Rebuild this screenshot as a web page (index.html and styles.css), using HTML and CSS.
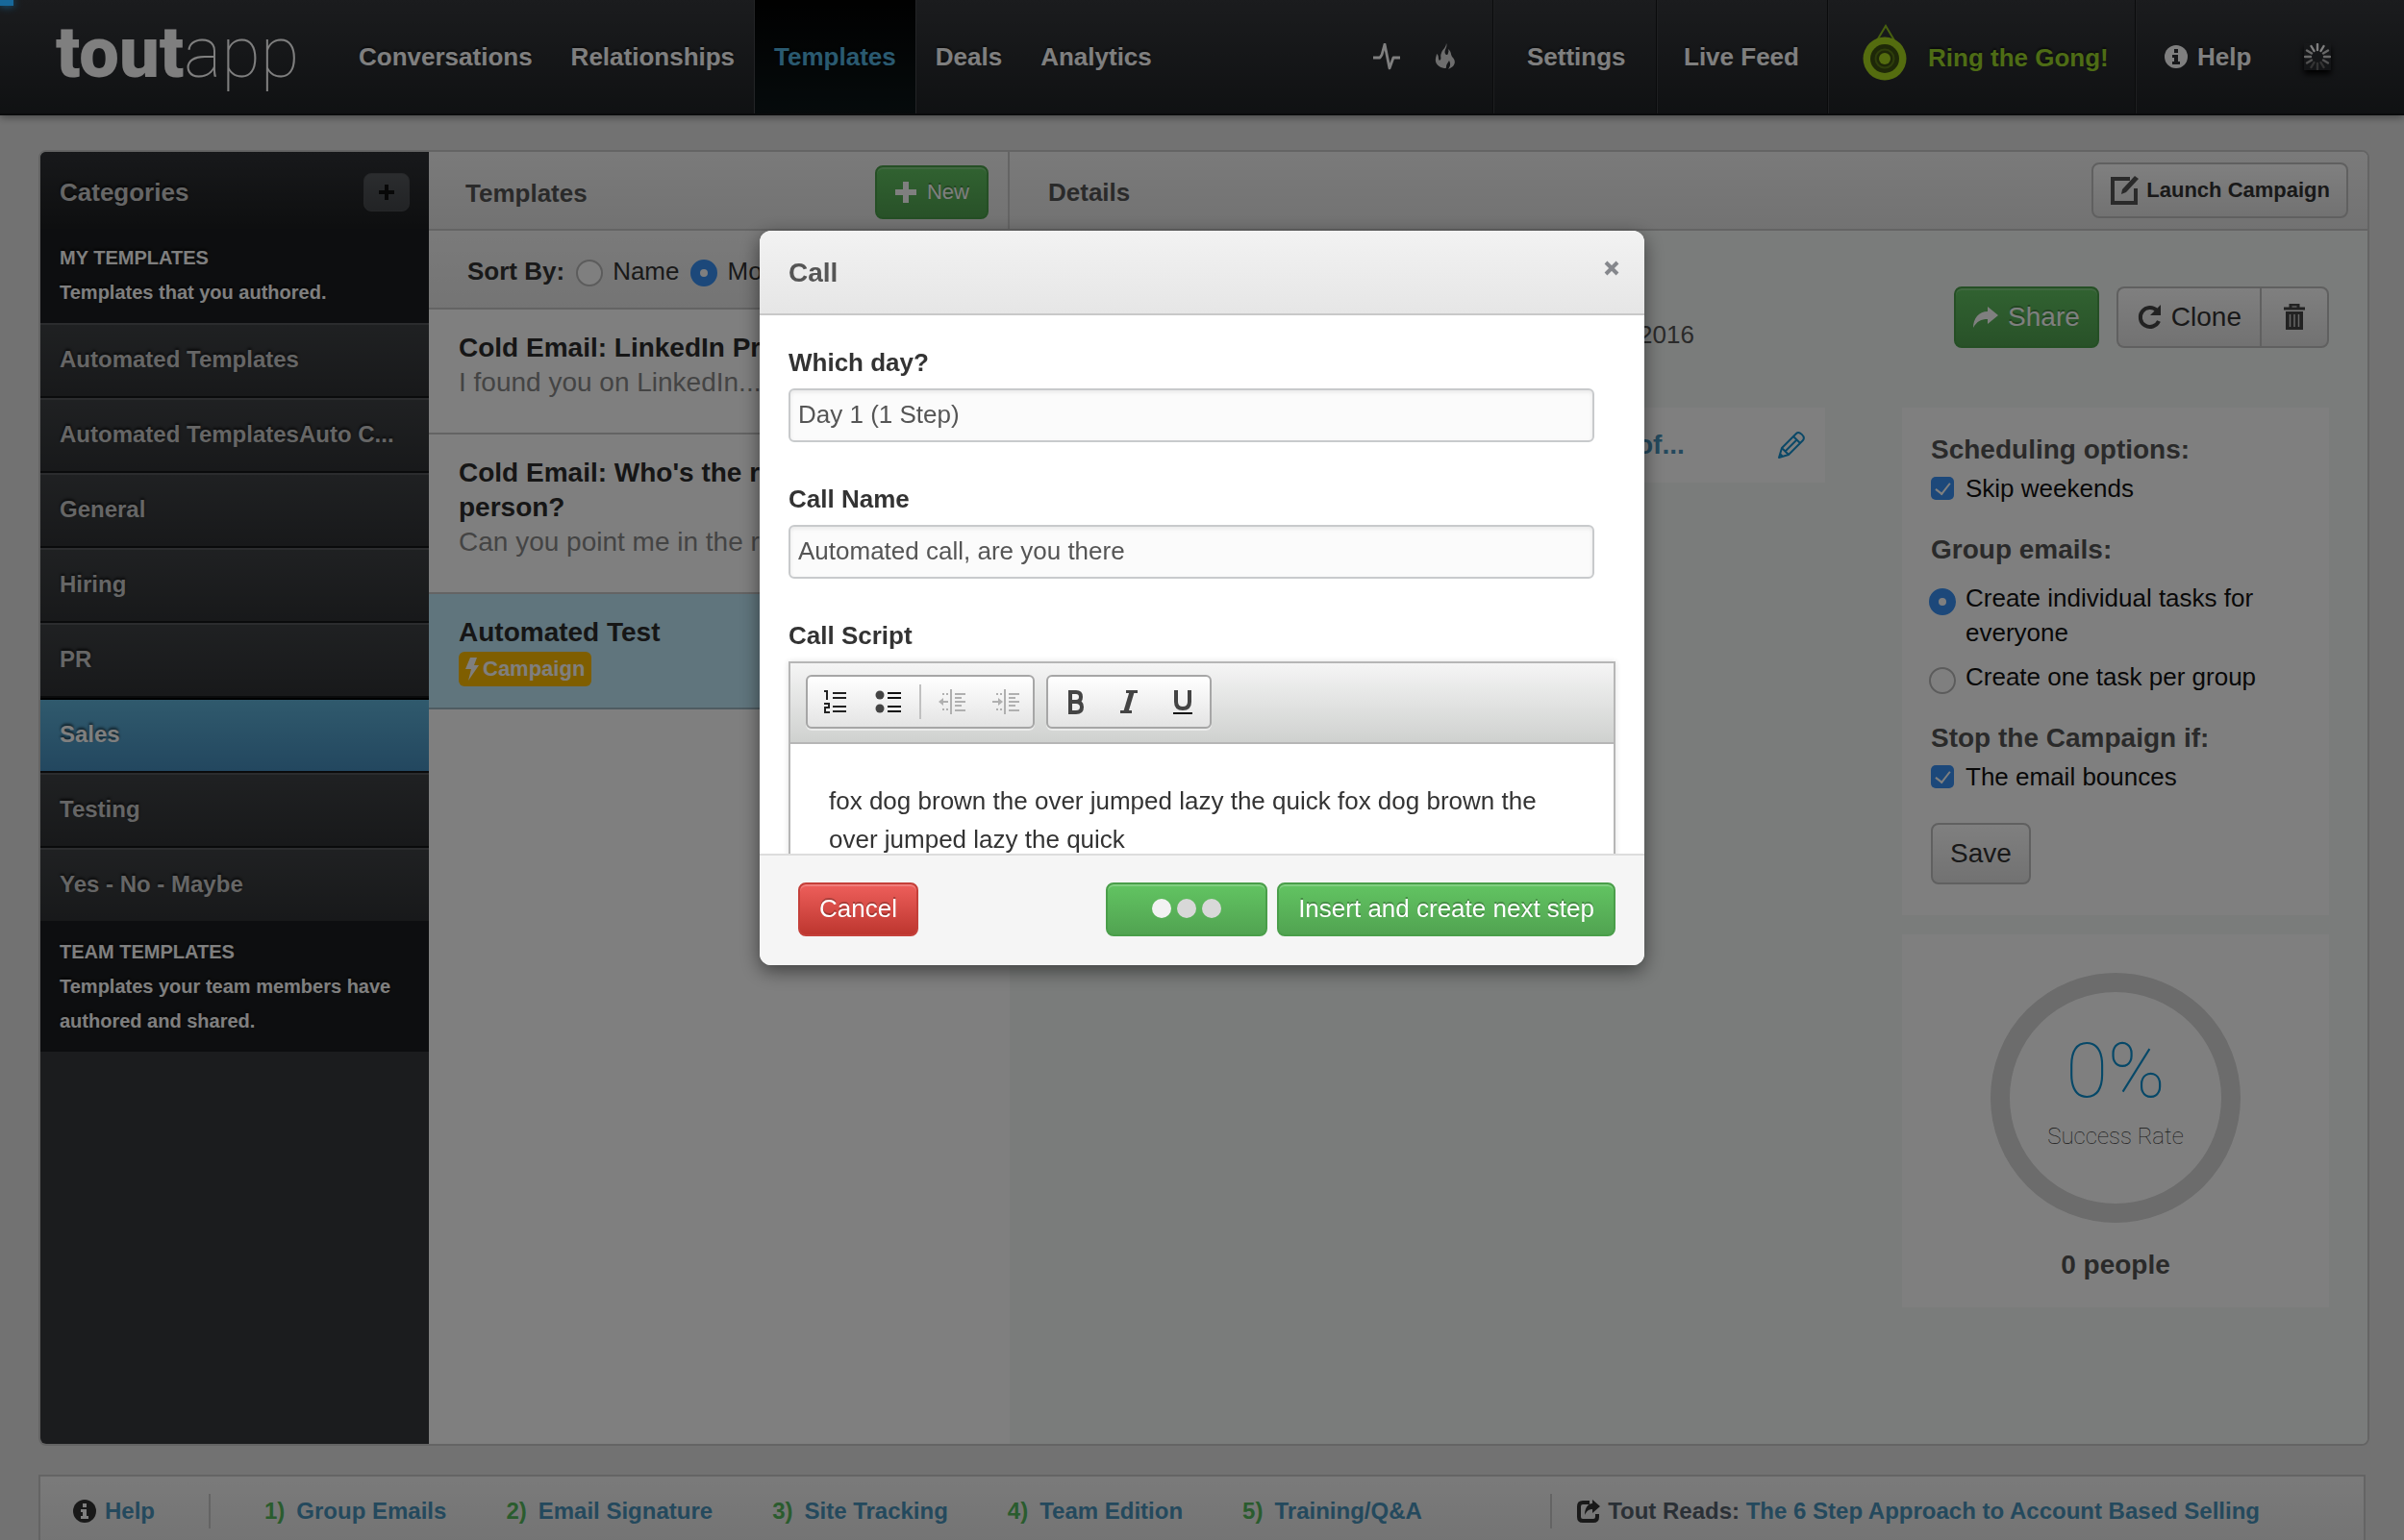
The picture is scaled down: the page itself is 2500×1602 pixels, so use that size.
FILE: index.html
```html
<!DOCTYPE html>
<html lang="en">
<head>
<meta charset="utf-8">
<title>ToutApp - Templates</title>
<link rel="stylesheet" href="styles.css">
</head>
<body>
<div class="app">
  <header class="topbar">
    <a class="logo" href="#"><span class="logo-bold">tout</span><span class="logo-thin">app</span></a>
    <nav class="nav">
      <a href="#">Conversations</a>
      <a href="#">Relationships</a>
      <a href="#" class="active">Templates</a>
      <a href="#">Deals</a>
      <a href="#">Analytics</a>
    </nav>
    <div class="tools">
      <svg width="28" height="28" viewBox="0 0 28 28"><path d="M0 15h7l2-3 3-11 5 25 4-11h7" fill="none" stroke="#fff" stroke-width="2.800" stroke-linejoin="round"/></svg>
      <svg width="22" height="28" viewBox="0 0 22 28"><path d="M12 0c2 4-3 7-1 11 1 2 3 1 3-1 1-2 0-3 0-4 4 3 2 6 5 9 4 5 1 10-5 12 2-3 3-5 1-9-1 2-3 4-3 6s0 2-2 2c-6-1-10-5-9-10 0-2 1-3 1-5 3 2 1 5 3 7 3-2 0-4 2-8 1-4 5-5 5-10z" fill="#ddd"/></svg>
    </div>
    <div class="account">
      <a href="#" class="settings">Settings</a>
      <a href="#" class="feed">Live Feed</a>
      <a href="#" class="gong">
        <svg width="46" height="60" viewBox="0 0 46 60"><path d="M15 17 24 2l9 15" fill="none" stroke="#8fc01e" stroke-width="2"/><circle cx="23" cy="36" r="22.500" fill="#a8d81e"/><circle cx="23" cy="36" r="15" fill="#3c5010"/><circle cx="23" cy="36" r="9.500" fill="none" stroke="#5d7c16" stroke-width="2"/><circle cx="23" cy="36" r="6" fill="#a8d81e"/></svg>
        Ring the Gong!
      </a>
      <a href="#" class="help">
        <svg width="24" height="24" viewBox="0 0 24 24"><circle cx="12" cy="12" r="12" fill="#fff"/><path d="M10 4h4v4h-4zM8 10h6v7h2v3H8v-3h2v-4H8z" fill="#2c2f33"/></svg>
        Help
      </a>
      <span class="spinner">
        <svg width="28" height="28" viewBox="0 0 28 28" stroke-width="2.400" stroke-linecap="round"><g stroke="#fff"><path d="M14 1v6M7.500 3l3 5M20.500 3l-3 5"/></g><g stroke="#d0d0d0"><path d="M3 7.500l5 3M25 7.500l-5 3M1 14h6M27 14h-6"/></g><g stroke="#a0a0a0"><path d="M3 20.500l5-3M25 20.500l-5-3"/></g><g stroke="#666"><path d="M7.500 25l3-5M20.500 25l-3-5M14 27v-6"/></g></svg>
      </span>
    </div>
  </header>

  <main class="panel">
    <aside class="sidebar">
      <div class="sidebar-head"><h2>Categories</h2><button class="add" aria-label="Add category"><svg width="16" height="16" viewBox="0 0 16 16"><path d="M8 0v16M0 8h16" stroke="#111" stroke-width="4"/></svg></button></div>
      <div class="section first"><h3>MY TEMPLATES</h3><p>Templates that you authored.</p></div>
      <ul>
        <li><a href="#">Automated Templates</a></li>
        <li><a href="#">Automated TemplatesAuto C...</a></li>
        <li><a href="#">General</a></li>
        <li><a href="#">Hiring</a></li>
        <li><a href="#">PR</a></li>
        <li><a href="#" class="active">Sales</a></li>
        <li><a href="#">Testing</a></li>
        <li><a href="#">Yes - No - Maybe</a></li>
      </ul>
      <div class="section"><h3>TEAM TEMPLATES</h3><p>Templates your team members have authored and shared.</p></div>
    </aside>

    <section class="templates">
      <div class="bar"><h2>Templates</h2>
        <button class="btn green small"><svg width="24" height="24" viewBox="0 0 24 24"><path d="M9 1h6v8h8v6h-8v8H9v-8H1V9h8z" fill="#fff"/></svg>New</button>
      </div>
      <div class="sort">
        <strong>Sort By:</strong>
        <label><input type="radio" name="sort">Name</label>
        <label><input type="radio" name="sort" checked>Modified</label>
      </div>
      <article class="card"><h3>Cold Email: LinkedIn Pro</h3><p>I found you on LinkedIn...</p></article>
      <article class="card"><h3>Cold Email: Who's the right person?</h3><p>Can you point me in the right</p></article>
      <article class="card selected"><h3>Automated Test</h3>
        <span class="badge"><svg width="14" height="24" viewBox="0 0 14 24"><path d="M5 0h7L9 8h5L3 24l3-12H0z" fill="#fff"/></svg>Campaign</span>
      </article>
    </section>

    <section class="details">
      <div class="bar"><h2>Details</h2>
        <button class="btn launch"><svg width="30" height="32" viewBox="0 0 30 32"><path d="M21 4H3v25h24V14" fill="none" stroke="#555" stroke-width="4"/><path d="M12 20l1-5L26 1l4 3-13 14z" fill="#555"/></svg>Launch Campaign</button>
      </div>
      <div class="detail-grid">
        <div class="summary">
          <p class="date">2016</p>
          <div class="step"><a href="#">of...</a>
            <svg width="30" height="30" viewBox="0 0 30 30" fill="none" stroke="#1590cf" stroke-width="2" stroke-linejoin="round"><path d="M2 28l3-10L20 3c3-3 10 3 7 7L12 25zM5 18l7 7M17 6l7 7M9 21L21 9M3 24l3 3"/></svg>
          </div>
        </div>
        <div class="side">
          <div class="actions">
            <button class="btn green"><svg width="26" height="22" viewBox="0 0 26 22"><path d="M15 0l11 9-11 9v-5C8 13 4 15 0 22 0 12 6 5 15 5z" fill="#fff"/></svg>Share</button>
            <div class="group">
              <button class="btn"><svg width="26" height="28" viewBox="0 0 26 28"><path d="M21 7a10 10 0 1 0 2 11" fill="none" stroke="#444" stroke-width="4"/><path d="M25 1v11H14z" fill="#444"/></svg>Clone</button>
              <button class="btn" aria-label="Delete"><svg width="22" height="28" viewBox="0 0 22 28"><path d="M7 4V1h8v3M0 5h22" fill="none" stroke="#444" stroke-width="3"/><path d="M2 8h18v19H2z" fill="#444"/><path d="M6.500 11v13M11 11v13M15.500 11v13" stroke="#ccc" stroke-width="1.500"/></svg></button>
            </div>
          </div>
          <form class="box options">
            <h4>Scheduling options:</h4>
            <label><input type="checkbox" checked>Skip weekends</label>
            <h4>Group emails:</h4>
            <div class="radios">
              <label><input type="radio" name="grp" checked>Create individual tasks for everyone</label>
              <label><input type="radio" name="grp">Create one task per group</label>
            </div>
            <h4>Stop the Campaign if:</h4>
            <label><input type="checkbox" checked>The email bounces</label>
            <button type="button" class="btn save">Save</button>
          </form>
          <div class="box rate">
            <div class="ring"><strong>0%</strong><span>Success Rate</span></div>
            <p>0 people</p>
          </div>
        </div>
      </div>
    </section>
  </main>

  <footer class="foot">
    <a href="#" class="foot-help"><svg width="24" height="24" viewBox="0 0 24 24"><circle cx="12" cy="12" r="12" fill="#333"/><path d="M10 4h4v4h-4zM8 10h6v7h2v3H8v-3h2v-4H8z" fill="#fff"/></svg>Help</a>
    <ol>
      <li><b>1)</b><a href="#">Group Emails</a></li>
      <li><b>2)</b><a href="#">Email Signature</a></li>
      <li><b>3)</b><a href="#">Site Tracking</a></li>
      <li><b>4)</b><a href="#">Team Edition</a></li>
      <li><b>5)</b><a href="#">Training/Q&amp;A</a></li>
    </ol>
    <p class="reads"><svg width="24" height="24" viewBox="0 0 24 24"><path d="M13 3H6Q2 3 2 7v11q0 4 4 4h11q4 0 4-4v-3" fill="none" stroke="#333" stroke-width="4"/><path d="M16 0l8 7-8 7v-4c-4 0-6 2-8 6 0-7 3-12 8-12z" fill="#333"/></svg><span>Tout Reads: <a href="#">The 6 Step Approach to Account Based Selling</a></span></p>
  </footer>
</div>

<div class="backdrop">
  <div class="modal" role="dialog" aria-labelledby="modal-title">
    <div class="modal-head"><h2 id="modal-title">Call</h2><button class="close" aria-label="Close"><svg width="16" height="16" viewBox="0 0 16 16"><path d="M2 2l12 12M14 2L2 14" stroke="#85878c" stroke-width="4"/></svg></button></div>
    <div class="modal-body">
      <label for="day">Which day?</label>
      <input type="text" id="day" value="Day 1 (1 Step)">
      <label for="name">Call Name</label>
      <input type="text" id="name" value="Automated call, are you there">
      <label id="script">Call Script</label>
      <div class="editor">
        <div class="toolbar">
          <div class="tool-group">
            <button aria-label="Numbered list"><svg width="28" height="28" viewBox="0 0 28 28" fill="none" stroke="#222" stroke-width="2"><path d="M3 3h3v9M3 16h5v4H4v5h5M12 5h14M12 10h14M12 19h14M12 24h14"/></svg></button>
            <button aria-label="Bulleted list"><svg width="28" height="28" viewBox="0 0 28 28"><circle cx="5" cy="7" r="4.500" fill="#444"/><circle cx="5" cy="21" r="4.500" fill="#444"/><path d="M13 5h14M13 10h14M13 19h14M13 24h14" stroke="#111" stroke-width="2"/></svg></button>
            <i class="sep"></i>
            <button aria-label="Outdent" disabled><svg width="28" height="28" viewBox="0 0 28 28" fill="none" stroke="#b0b0b0" stroke-width="2"><path d="M13 1v26M17 6h11M17 10h7M17 14h11M17 18h7M17 23h11M4 14h6"/><path d="M4 6h7M4 22h7" stroke-dasharray="2 2"/><path d="M0 14l5-4v8z" fill="#b0b0b0" stroke="none"/></svg></button>
            <button aria-label="Indent" disabled><svg width="28" height="28" viewBox="0 0 28 28" fill="none" stroke="#b0b0b0" stroke-width="2"><path d="M13 1v26M17 6h11M17 10h7M17 14h11M17 18h7M17 23h11M0 14h6"/><path d="M4 6h7M4 22h7" stroke-dasharray="2 2"/><path d="M11 14l-5-4v8z" fill="#b0b0b0" stroke="none"/></svg></button>
          </div>
          <div class="tool-group">
            <button aria-label="Bold"><svg width="28" height="28" viewBox="0 0 28 28"><path d="M7 4h8q5 0 5 5t-5 5h-5M15 14q6 0 6 5.500T15 25H7" fill="none" stroke="#444" stroke-width="4"/><path d="M7 2h4v24H7z" fill="#444"/></svg></button>
            <button aria-label="Italic"><svg width="28" height="28" viewBox="0 0 28 28"><path d="M11 3.500h12M5 24.500h12" stroke="#444" stroke-width="3"/><path d="M17 4l-6 20" stroke="#444" stroke-width="5"/></svg></button>
            <button aria-label="Underline"><svg width="28" height="28" viewBox="0 0 28 28"><path d="M7 2v12q0 7 7 7t7-7V2" fill="none" stroke="#444" stroke-width="4"/><path d="M4 26h20" stroke="#111" stroke-width="2"/></svg></button>
          </div>
        </div>
        <div class="editor-text" contenteditable="true" role="textbox" aria-labelledby="script">fox dog brown the over jumped lazy the quick fox dog brown the over jumped lazy the quick</div>
      </div>
    </div>
    <div class="modal-foot">
      <button class="btn red">Cancel</button>
      <button class="btn green loading" aria-label="Inserting"><i class="on"></i><i></i><i></i></button>
      <button class="btn green">Insert and create next step</button>
    </div>
  </div>
</div>
<div class="progress"></div>
</body>
</html>
```
FILE: styles.css
```css
* { box-sizing: border-box; }
body {
  margin: 0;
  background: #e5e5e5;
  color: #333;
  font: 26px/36px "Liberation Sans", Arial, sans-serif;
}
h2, h3, h4, p, ul, ol { margin: 0; padding: 0; }
ul, ol { list-style: none; }
a { color: inherit; text-decoration: none; }
svg { display: block; flex: none; }
button { font: inherit; cursor: pointer; }
h2 { font-size: 26px; }

.app {
  display: flex;
  flex-direction: column;
  height: 100vh;
  min-height: 1200px;
  overflow: hidden;
}

/* Top bar */
.topbar {
  display: flex;
  flex: none;
  height: 120px;
  background: linear-gradient(#36383c, #202326);
  box-shadow: 0 2px 8px rgba(0, 0, 0, .4);
  border-bottom: 2px solid #141618;
  color: #fff;
  font-weight: bold;
  text-shadow: 0 -2px 2px rgba(0, 0, 0, .5);
}
.logo {
  display: flex;
  width: 353px;
  padding-left: 58px;
  font: 74px/110px Roboto, sans-serif;
  text-shadow: none;
}
.logo-bold { font-weight: 900; }
.logo-thin { font-weight: 100; }
.nav { display: flex; }
.nav a { padding: 0 20px; line-height: 118px; }
.nav .active {
  background: linear-gradient(#020202, #0c1618);
  border: solid #46484c;
  border-width: 0 1px;
  color: #55b5e0;
}
.tools { display: flex; align-items: center; gap: 36px; margin-left: auto; padding-right: 38px; }
.account { display: flex; width: 948px; line-height: 118px; }
.account a { display: flex; align-items: center; }
.account > a { border-left: 1px solid #141618; box-shadow: inset 1px 0 #3c3e42; }
.settings { width: 170px; padding-left: 35px; }
.feed { width: 178px; padding-left: 28px; }
.gong { width: 320px; padding: 2px 0 0 36px; gap: 22px; color: #9cd82a; }
.gong svg { margin-top: -10px; }
.help { width: 176px; padding-left: 30px; gap: 10px; }
.spinner { align-self: center; box-shadow: 0 4px 6px #000; }

/* Main panel */
.panel {
  display: grid;
  grid-template-columns: 404px 604px 1fr;
  flex: 1;
  min-height: 0;
  margin: 36px 36px 0 40px;
  border: 2px solid #c8c8c8;
  border-radius: 8px;
  background: #fff;
  overflow: hidden;
}
.sidebar { background: #36383c; color: #ccc; font-weight: bold; text-shadow: 0 -2px 3px rgba(0, 0, 0, .7); }
.sidebar-head {
  display: flex;
  align-items: center;
  justify-content: space-between;
  height: 80px;
  padding: 4px 20px 0;
  background: linear-gradient(#303236, #1c1e20);
}
.add {
  display: flex;
  align-items: center;
  justify-content: center;
  width: 48px;
  height: 40px;
  border: 1px solid #4c4e52;
  border-radius: 8px;
  background: linear-gradient(#56595d, #44474b);
}
.section { padding: 14px 20px; background: #1b1d20; color: #fff; font-size: 20px; }
.section.first { padding: 12px 20px 14px; }
.section h3 { font-size: 20px; }
.sidebar li a {
  display: block;
  height: 78px;
  padding: 0 20px;
  border: solid #56595c;
  border-width: 2px 0;
  border-bottom-color: #141618;
  background: linear-gradient(#3f4245, #303235);
  font-size: 24px;
  line-height: 72px;
}
.sidebar li:last-child a { height: 76px; border-bottom: 0; }
.sidebar li .active {
  border-top-color: #000;
  background: linear-gradient(#60b4da, #468fbf);
  color: #fff;
}

.bar {
  display: flex;
  align-items: center;
  justify-content: space-between;
  height: 82px;
  border-bottom: 2px solid #c8c8c8;
  background: linear-gradient(#f5f5f5, #e5e5e5);
  color: #555;
}
.bar h2 { padding-top: 2px; }
.templates .bar { padding: 4px 20px 0 38px; border-right: 2px solid #c8c8c8; }
.details .bar { padding: 0 20px 0 40px; }
.details .bar h2 { padding-top: 4px; }
.sort {
  display: flex;
  height: 82px;
  padding: 24px 0 0 40px;
  border-bottom: 2px solid #c8c8c8;
  background: linear-gradient(#f5f5f5, #e9e9e9);
}
.sort label { display: flex; gap: 10px; margin-left: 12px; }
.sort input { margin-top: 8px; }

input[type="radio"], input[type="checkbox"] {
  appearance: none;
  flex: none;
  display: grid;
  place-items: center;
  margin: 0;
}
input[type="radio"] {
  width: 28px;
  height: 28px;
  border: 2px solid #b8b8b8;
  border-radius: 50%;
  background: #fff;
}
.sort input[type="radio"] { margin-top: 6px; }
input[type="radio"]:checked { border: 10px solid #3891f4; }
input[type="checkbox"] { width: 24px; height: 24px; border-radius: 5px; background: #3891f4; }
input[type="checkbox"]::after {
  content: "";
  width: 7px;
  height: 13px;
  margin-top: -3px;
  border: solid #fff;
  border-width: 0 2px 2px 0;
  transform: rotate(38deg);
}

.card {
  padding: 22px 160px 34px 31px;
  border-bottom: 2px solid #c8c8c8;
  font-size: 28px;
  white-space: nowrap;
}
.card h3 { font-size: 28px; color: #2c2c2c; white-space: normal; }
.card p { color: #888; }
.card.selected { padding-bottom: 22px; background: #c0ebfb; border-color: #9eb8c4; }
.badge {
  display: flex;
  align-items: center;
  gap: 4px;
  width: fit-content;
  margin-top: 2px;
  padding: 0 7px;
  border-radius: 6px;
  background: #ffbc00;
  color: #fff;
  font-size: 22px;
  font-weight: bold;
}

/* Buttons */
.btn {
  display: flex;
  align-items: center;
  justify-content: center;
  gap: 10px;
  height: 64px;
  padding: 0 18px;
  border: 2px solid #c0c0c0;
  border-radius: 8px;
  background: linear-gradient(#fff, #e4e4e4);
  color: #333;
  font-size: 28px;
  white-space: nowrap;
}
.btn.green {
  border-color: #4a9e4a;
  background: linear-gradient(#62c462, #51a351);
  box-shadow: inset 0 2px rgba(255, 255, 255, .2);
  color: #fff;
  text-shadow: 0 -2px rgba(0, 0, 0, .25);
}
.btn.red {
  border-color: #c4403a;
  background: linear-gradient(#ee5f5b, #bd362f);
  box-shadow: inset 0 2px rgba(255, 255, 255, .2);
  color: #fff;
  text-shadow: 0 -2px rgba(0, 0, 0, .25);
}
.btn.small { height: 56px; gap: 10px; font-size: 22px; }
.btn.launch { height: 58px; gap: 8px; font-size: 22px; font-weight: bold; }
.details .bar .btn { padding: 0 17px; }
.group { display: flex; }
.group .btn:first-child { padding: 0 19px; border-radius: 8px 0 0 8px; border-right: 0; }
.group .btn:last-child { border-radius: 0 8px 8px 0; padding: 0 23px; }

/* Details column */
.details { background: #f5f9f7; }
.detail-grid { display: flex; justify-content: space-between; padding: 58px 40px 0; }
.summary { flex: 1; max-width: 808px; padding-top: 32px; }
.date, .step { padding-left: 612px; }
.date { padding-left: 614px; color: #555; }
.step {
  display: flex;
  align-items: center;
  justify-content: space-between;
  height: 78px;
  margin-top: 58px;
  padding-right: 20px;
  background: #fff;
  color: #4892ba;
  font-size: 28px;
  font-weight: bold;
}
.side { width: 444px; }
.actions { display: flex; justify-content: flex-end; gap: 18px; margin-bottom: 62px; }
.box { background: #fff; }
.options { height: 528px; padding: 26px 30px; }
.options h4 { font-size: 28px; line-height: 36px; color: #555; margin-top: 28px; }
.options h4:first-child { margin-top: 0; }
.options label { display: flex; align-items: center; gap: 12px; padding-top: 4px; color: #111; }
.radios { padding-top: 10px; }
.options .radios label { align-items: flex-start; gap: 10px; margin-left: -2px; }
.options .radios label + label { padding-top: 10px; }
.radios input { margin-top: 8px; }
.save { margin-top: 30px; }
.rate {
  display: flex;
  flex-direction: column;
  align-items: center;
  height: 388px;
  margin-top: 20px;
  padding-top: 40px;
  color: #555;
  font-size: 28px;
  font-weight: bold;
}
.ring {
  display: flex;
  flex-direction: column;
  align-items: center;
  width: 260px;
  height: 260px;
  margin-bottom: 26px;
  padding-top: 40px;
  border: 20px solid #d8d8d8;
  border-radius: 50%;
  font-family: Roboto, sans-serif;
}
.ring strong { color: #0c90d0; font-size: 80px; font-weight: 100; line-height: 84px; }
.ring span { font-size: 24px; font-weight: 100; line-height: 52px; color: #333; }

/* Footer */
.foot {
  display: flex;
  align-items: flex-start;
  flex: none;
  height: 68px;
  margin: 30px 40px 0;
  padding: 18px 34px 0;
  border: 2px solid #c8c8c8;
  border-bottom: 0;
  background: linear-gradient(#f5f5f5, #e9e9e9);
  color: #4892ba;
  font-size: 24px;
  font-weight: bold;
}
.foot-help { display: flex; align-items: center; gap: 9px; width: 143px; border-right: 2px solid #c8c8c8; }
.foot ol { display: flex; gap: 62px; margin-left: 56px; }
.foot li { display: flex; gap: 12px; }
.foot b { color: #54b85c; }
.reads {
  display: flex;
  align-items: center;
  gap: 8px;
  margin: 0 74px 0 auto;
  padding-left: 26px;
  border-left: 2px solid #c8c8c8;
  color: #55606c;
}
.reads a { color: #4892ba; }

/* Modal */
.backdrop {
  position: fixed;
  inset: 0;
  display: flex;
  align-items: flex-start;
  justify-content: center;
  padding-top: 240px;
  background: rgba(0, 0, 0, .5);
}
.modal {
  width: 920px;
  border-radius: 12px;
  background: #fff;
  box-shadow: 0 6px 20px rgba(0, 0, 0, .5);
  overflow: hidden;
}
.modal-head {
  display: flex;
  align-items: center;
  justify-content: space-between;
  height: 88px;
  padding: 0 24px 0 30px;
  border-bottom: 2px solid #c8c8c8;
  background: linear-gradient(#f2f2f2, #e6e6e6);
  color: #555;
}
.modal-head h2 { padding-top: 2px; font-size: 28px; }
.close { padding: 2px; margin-top: -8px; border: 0; background: none; }
.modal-body { height: 560px; padding: 30px 30px 0; overflow: hidden; }
.modal-body > label { display: block; height: 46px; font-weight: bold; line-height: 38px; }
.modal-body > input {
  display: block;
  width: calc(100% - 22px);
  height: 56px;
  margin-bottom: 40px;
  padding: 0 8px 2px;
  border: 2px solid #c8cacc;
  border-radius: 6px;
  background: #fbfbfb;
  box-shadow: inset 0 2px 4px rgba(0, 0, 0, .08);
  color: #555;
  font: inherit;
}
.editor { border: 2px solid #b6b6b6; box-shadow: 0 0 6px rgba(0, 0, 0, .12); }
.toolbar {
  display: flex;
  gap: 12px;
  height: 84px;
  padding: 12px 16px;
  border-bottom: 2px solid #b6b6b6;
  background: linear-gradient(#f5f5f5, #cfd1cf);
}
.tool-group {
  display: flex;
  align-items: center;
  height: 56px;
  border: 2px solid #a6a6a6;
  border-radius: 6px;
  background: linear-gradient(#fff, #e4e4e4);
  box-shadow: 0 2px rgba(255, 255, 255, .5);
}
.tool-group button { padding: 0 14px; border: 0; background: none; }
.sep { width: 2px; height: 36px; margin: 0 4px; background: #c0c0c0; }
.editor-text { height: 300px; padding: 39px 40px; line-height: 40px; outline: 0; }
.modal-foot {
  display: flex;
  gap: 10px;
  height: 116px;
  padding: 28px 30px 0 40px;
  border-top: 2px solid #ddd;
  background: #f5f5f5;
}
.modal-foot .btn { height: 56px; padding: 0 20px 2px; font-size: 26px; }
.modal-foot .loading { width: 168px; gap: 6px; margin-left: auto; }
.loading i { width: 20px; height: 20px; border-radius: 50%; background: #d8d8d8; }
.loading .on { background: #f2f2f2; }

/* Page loading indicator */
.progress {
  position: fixed;
  top: 0;
  left: 0;
  width: 14px;
  height: 6px;
  background: #17689a;
  box-shadow: 0 0 8px #17689a;
}
```
